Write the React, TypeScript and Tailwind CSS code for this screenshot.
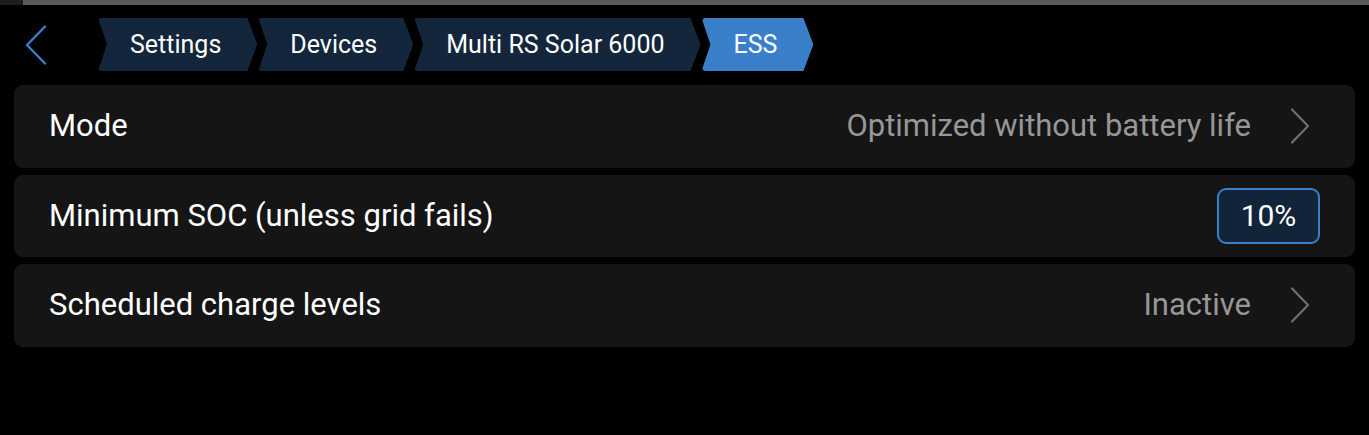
import React from 'react';

const crumbShape =
    '[clip-path:polygon(0_0,calc(100%-10px)_0,100%_50%,calc(100%-10px)_100%,0_100%,9px_50%)]';

const Crumb: React.FC<{ label: string; active?: boolean }> = ({ label, active }) => (
    <div
        className={`h-[53px] flex items-center pl-8 pr-9 text-[25px] text-white rounded-[4px] ${crumbShape} ${active ? 'bg-[#3a7fca]' : 'bg-[#13263c]'
            }`}
    >
        {label}
    </div>
);

const Chevron: React.FC = () => (
    <svg width="20" height="36" viewBox="0 0 20 36" fill="none" className="shrink-0">
        <path d="M2 1.5 L18 18 L2 34.5" stroke="#6f6f6f" strokeWidth="2.2" strokeLinecap="round" strokeLinejoin="round" />
    </svg>
);

const Row: React.FC<{ children: React.ReactNode }> = ({ children }) => (
    <div className="h-[82.5px] rounded-[9px] bg-[#151515] flex items-center pl-[35px] text-[31px] text-white">
        {children}
    </div>
);

const App: React.FC = () => {
    return (
        <div className="w-full h-[435px] bg-black overflow-hidden" style={{ fontFamily: 'Roboto, "Liberation Sans", sans-serif' }}>
            {/* top strip */}
            <div className="flex h-[5px]">
                <div className="w-[23px] bg-[#1c1c1c]" />
                <div className="flex-1 bg-[#5b5b5b]" />
            </div>

            {/* header with back button and breadcrumbs */}
            <div className="flex items-center mt-[13px] h-[53px]">
                <button className="ml-[25px] w-[22px] h-[40px] flex items-center">
                    <svg width="22" height="40" viewBox="0 0 22 40" fill="none">
                        <path d="M20 1.5 L2 20 L20 38.5" stroke="#3a7fca" strokeWidth="2.4" strokeLinecap="round" strokeLinejoin="round" />
                    </svg>
                </button>
                <div className="flex items-center ml-[51px] gap-[1px]">
                    <Crumb label="Settings" />
                    <Crumb label="Devices" />
                    <Crumb label="Multi RS Solar 6000" />
                    <Crumb label="ESS" active />
                </div>
            </div>

            {/* settings list */}
            <div className="mx-[14px] mt-[14px] flex flex-col gap-[7px]">
                <Row>
                    <span className="flex-1">Mode</span>
                    <span className="text-[#979797]">Optimized without battery life</span>
                    <div className="ml-[39px] mr-[45px]">
                        <Chevron />
                    </div>
                </Row>
                <Row>
                    <span className="flex-1">Minimum SOC (unless grid fails)</span>
                    <div className="mr-[35px] w-[103px] h-[56px] rounded-[9px] border-2 border-[#3a7fca] bg-[#12243a] flex items-center justify-center text-[30px]">
                        10%
                    </div>
                </Row>
                <Row>
                    <span className="flex-1">Scheduled charge levels</span>
                    <span className="text-[#979797]">Inactive</span>
                    <div className="ml-[39px] mr-[45px]">
                        <Chevron />
                    </div>
                </Row>
            </div>
        </div>
    );
};

export default App;
